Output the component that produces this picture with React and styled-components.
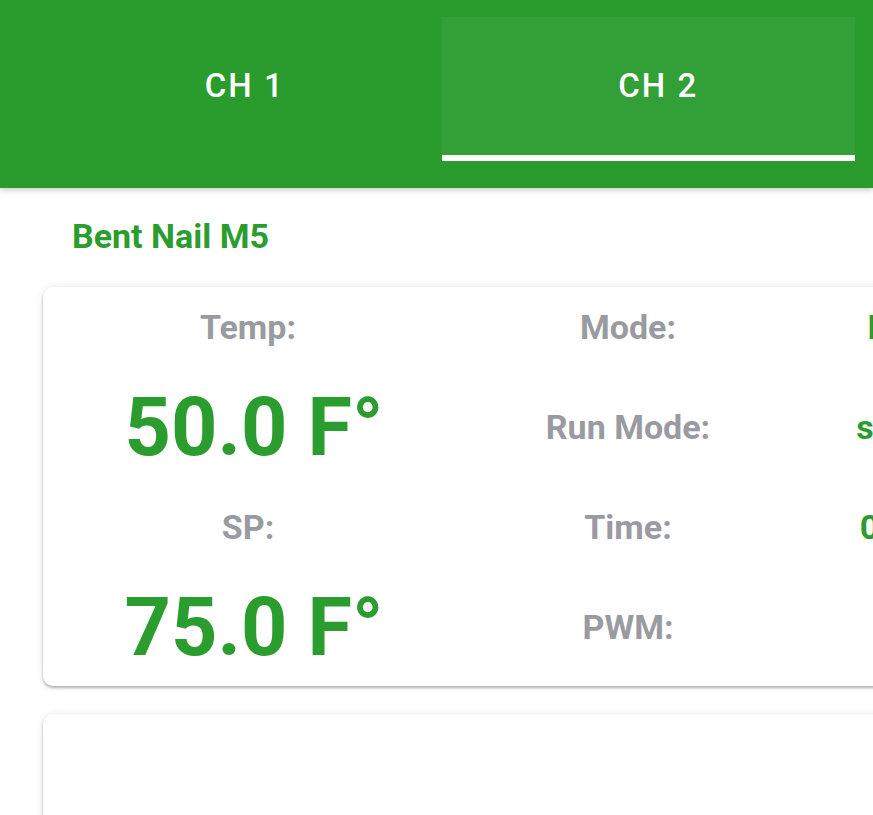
import React, { useState } from 'react'
import styled, { createGlobalStyle } from 'styled-components'

const GlobalStyle = createGlobalStyle`
  html, body {
    margin: 0;
    padding: 0;
    background: #ffffff;
    overflow-x: hidden;
    font-family: Roboto, "Noto Sans", "Liberation Sans", sans-serif;
  }
`

const GREEN = '#2b9c2e'

const Header = styled.header`
  background: #2a9b2d;
  padding: 17px 18px 27px 28px;
  box-shadow: 0 2px 6px rgba(0, 0, 0, 0.22);
  position: relative;
  z-index: 1;
`

const TabRow = styled.div`
  display: flex;
`

const Tab = styled.button`
  flex: 1;
  height: 144px;
  border: none;
  margin: 0;
  padding: 0 0 8px 20px;
  background: ${p => (p.$active ? '#32a036' : 'transparent')};
  color: #ffffff;
  font-family: inherit;
  font-size: 33px;
  font-weight: 500;
  letter-spacing: 2px;
  position: relative;
  cursor: pointer;

  &::after {
    content: '';
    display: ${p => (p.$active ? 'block' : 'none')};
    position: absolute;
    left: 0;
    right: 0;
    bottom: 0;
    height: 6px;
    background: #ffffff;
  }
`

const Content = styled.main`
  width: 1100px;
  padding: 28px 0 0 43px;
`

const Title = styled.h2`
  margin: 0 0 31px 29px;
  line-height: 40px;
  font-size: 34px;
  font-weight: 700;
  color: ${GREEN};
`

const Card = styled.section`
  background: #ffffff;
  border-radius: 10px;
  box-shadow: 0 2px 3px rgba(0, 0, 0, 0.28), 0 0 10px rgba(0, 0, 0, 0.08);
  margin-bottom: 28px;
  min-height: ${p => p.$min || 0}px;
`

const Grid = styled.div`
  display: grid;
  grid-template-columns: 422px 326px 254px;
  grid-template-rows: repeat(4, 80px);
  row-gap: 20px;
  padding-bottom: 19px;
`

const Cell = styled.div`
  display: flex;
  align-items: center;
  justify-content: center;
  white-space: nowrap;
`

const Label = styled(Cell)`
  font-size: 34px;
  font-weight: 700;
  color: #9a9ba1;
  padding-right: ${p => p.$shift || 0}px;
`

const BigValue = styled(Cell)`
  font-size: 81px;
  font-weight: 700;
  color: ${GREEN};
`

const Value = styled(Cell)`
  font-size: 34px;
  font-weight: 700;
  color: ${GREEN};
`

const stats = [
  ['Mode:', 'Profile'],
  ['Run Mode:', 'stopped'],
  ['Time:', '0:00:00'],
  ['PWM:', '0%'],
]

export default function App() {
  const [tab, setTab] = useState(1)
  const left = [
    <Label key="t" $shift={12}>Temp:</Label>,
    <BigValue key="tv">50.0 F°</BigValue>,
    <Label key="s" $shift={12}>SP:</Label>,
    <BigValue key="sv">75.0 F°</BigValue>,
  ]
  return (
    <>
      <GlobalStyle />
      <Header>
        <TabRow>
          {['CH 1', 'CH 2'].map((name, i) => (
            <Tab key={name} $active={tab === i} onClick={() => setTab(i)}>
              {name}
            </Tab>
          ))}
        </TabRow>
      </Header>
      <Content>
        <Title>Bent Nail M5</Title>
        <Card>
          <Grid>
            {stats.map(([label, value], i) => (
              <React.Fragment key={label}>
                {left[i]}
                <Label>{label}</Label>
                <Value>{value}</Value>
              </React.Fragment>
            ))}
          </Grid>
        </Card>
        <Card $min={300} />
      </Content>
    </>
  )
}
